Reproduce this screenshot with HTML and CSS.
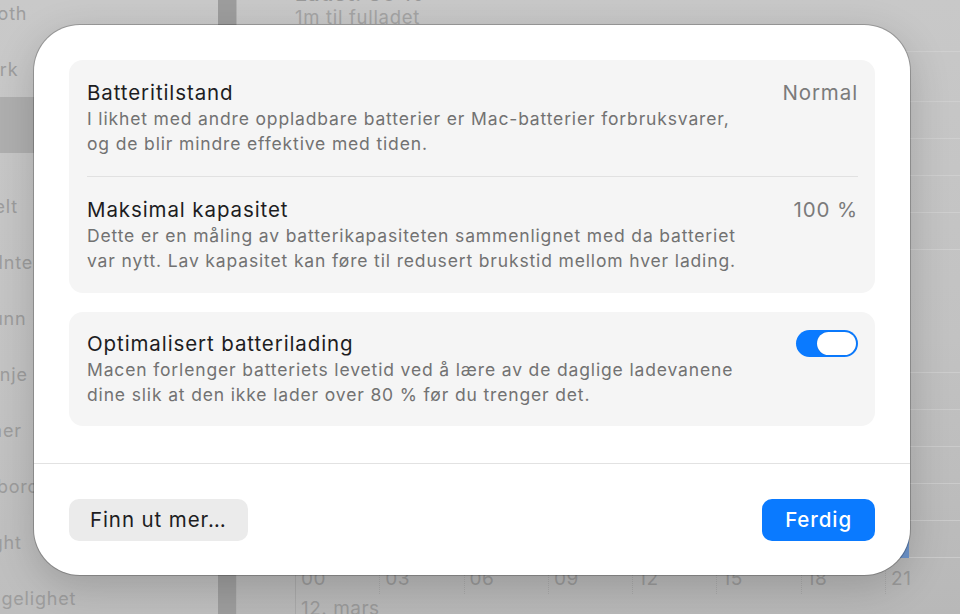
FILE: index.html
```html
<!DOCTYPE html>
<html lang="no">
<head>
<meta charset="utf-8">
<title>Batteritilstand</title>
<link rel="stylesheet" href="styles.css">
</head>
<body>
<div class="window">
  <aside class="sidebar">
    <ul class="nav">
      <li class="nav-item">Bluetooth</li>
      <li class="nav-item">Nettverk</li>
      <li class="nav-item is-active">Batteri</li>
      <li class="nav-item nav-group">Generelt</li>
      <li class="nav-item">Apple Intelligence og Siri</li>
      <li class="nav-item">Bakgrunn</li>
      <li class="nav-item">Menylinje</li>
      <li class="nav-item">Skjermer</li>
      <li class="nav-item">Skrivebord og Dock</li>
      <li class="nav-item">Spotlight</li>
      <li class="nav-item">Tilgjengelighet</li>
    </ul>
  </aside>
  <div class="split"></div>
  <main class="main">
    <header class="status">
      <div class="status-title">Ladet: 80 %</div>
      <div class="status-sub">1m til fulladet</div>
    </header>
    <div class="list">
      <div class="list-row list-row-first"></div>
      <div class="list-row"></div>
      <div class="list-row"></div>
      <div class="list-row"></div>
      <div class="list-row"></div>
    </div>
    <div class="chart">
      <div class="plot">
        <div class="plot-row"></div>
        <div class="plot-row"></div>
        <div class="plot-row"></div>
        <div class="plot-row"></div>
        <div class="plot-row"></div>
        <div class="bar"></div>
      </div>
      <div class="axis">
        <span class="tick tick-first">00</span>
        <span class="tick">03</span>
        <span class="tick">06</span>
        <span class="tick">09</span>
        <span class="tick">12</span>
        <span class="tick">15</span>
        <span class="tick">18</span>
        <span class="tick">21</span>
      </div>
      <div class="date">12. mars</div>
    </div>
  </main>
</div>

<section class="sheet">
  <div class="sheet-body">
    <div class="card">
      <div class="row">
        <div class="text">
          <div class="title">Batteritilstand</div>
          <div class="desc">I likhet med andre oppladbare batterier er Mac-batterier forbruksvarer,<br>og de blir mindre effektive med tiden.</div>
        </div>
        <div class="value">Normal</div>
      </div>
      <div class="row">
        <div class="text">
          <div class="title">Maksimal kapasitet</div>
          <div class="desc">Dette er en måling av batterikapasiteten sammenlignet med da batteriet<br>var nytt. Lav kapasitet kan føre til redusert brukstid mellom hver lading.</div>
        </div>
        <div class="value">100 %</div>
      </div>
    </div>
    <div class="card card-toggle">
      <div class="row">
        <div class="text">
          <div class="title">Optimalisert batterilading</div>
          <div class="desc">Macen forlenger batteriets levetid ved å lære av de daglige ladevanene<br>dine slik at den ikke lader over 80 % før du trenger det.</div>
        </div>
        <div class="toggle" role="switch" aria-checked="true"><span class="knob"></span></div>
      </div>
    </div>
  </div>
  <footer class="sheet-footer">
    <button class="btn btn-secondary">Finn ut mer…</button>
    <button class="btn btn-primary">Ferdig</button>
  </footer>
</section>
</body>
</html>
```

FILE: styles.css
```css
* { box-sizing: border-box; }

html, body {
  margin: 0;
  padding: 0;
  width: 960px;
  height: 614px;
  overflow: hidden;
  font-family: "Inter", "Noto Sans", "Liberation Sans", sans-serif;
}

body {
  position: relative;
  background: #c4c4c4;
}

/* ---------- dimmed window behind the sheet ---------- */
.window {
  display: flex;
  width: 960px;
  height: 614px;
  overflow: hidden;
}

.sidebar {
  width: 218px;
  flex: none;
  background: linear-gradient(180deg, #c9c9c9 0%, #c4c4c4 60%, #bebebe 100%);
  overflow: hidden;
}

.nav {
  list-style: none;
  margin: -15px 0 0 0;
  padding: 0;
}

.nav-item {
  height: 56px;
  display: flex;
  align-items: center;
  text-indent: -61px;
  font-size: 18px;
  letter-spacing: 0.8px;
  color: #9d9d9d;
  white-space: nowrap;
}

.nav-item.is-active {
  background: #afafaf;
  color: #8c8c8c;
}

.nav-group {
  margin-top: 25px;
}

.split {
  width: 19px;
  flex: none;
  background: #9d9d9d;
  border-right: 1px solid #b3b3b3;
}

.main {
  flex: 1;
  display: flex;
  flex-direction: column;
  background: linear-gradient(180deg, #c8c8c8 0%, #c2c2c2 55%, #b8b8b8 100%);
  padding-left: 58px;
  overflow: hidden;
}

.main > * {
  flex: none;
}

.status {
  margin-top: -17px;
  height: 69px;
  border-bottom: 1px solid #d0d0d0;
}

.status-title {
  font-size: 21px;
  font-weight: 600;
  line-height: 22px;
  letter-spacing: 0.6px;
  color: #999999;
}

.status-sub {
  font-size: 18.5px;
  line-height: 24px;
  letter-spacing: 0.7px;
  color: #a4a4a4;
}

.list-row {
  height: 37px;
  border-bottom: 1px solid #cfcfcf;
}

.list-row-first {
  height: 50px;
}

.chart {
  margin-top: 122px;
  display: flex;
  flex-direction: column;
}

.plot {
  position: relative;
  border-top: 1px solid #cdcdcd;
}

.plot-row {
  height: 37px;
  border-bottom: 1px solid #cbcbcb;
}

.bar {
  position: absolute;
  left: 600px;
  bottom: 0;
  width: 14px;
  height: 60px;
  background: #6f97cf;
  border-radius: 2px 2px 0 0;
}

.axis {
  display: flex;
  height: 36px;
}

.tick {
  width: 84.3px;
  flex: none;
  padding: 10px 0 0 5px;
  font-size: 19px;
  line-height: 22px;
  letter-spacing: 0.5px;
  color: #9a9a9a;
  border-left: 1px dotted #a9a9a9;
}

.tick-first {
  border-left: 1px solid #a9a9a9;
}

.date {
  padding: 4px 0 0 5px;
  font-size: 19px;
  line-height: 22px;
  letter-spacing: 0.5px;
  color: #9a9a9a;
  border-left: 1px solid #a9a9a9;
}

/* ---------- sheet ---------- */
.sheet {
  position: absolute;
  left: 34px;
  top: 25px;
  width: 876px;
  height: 550px;
  background: #ffffff;
  border-radius: 46px;
  box-shadow: 0 0 0 1px rgba(0, 0, 0, 0.22), 0 12px 40px rgba(0, 0, 0, 0.18);
  display: flex;
  flex-direction: column;
  overflow: hidden;
}

.sheet-body {
  padding: 35px 35px 37px;
  display: flex;
  flex-direction: column;
  gap: 19px;
}

.card {
  background: #f5f5f5;
  border-radius: 14px;
  padding: 0 17px 0 18px;
}

.row {
  display: flex;
  justify-content: space-between;
  align-items: flex-start;
  gap: 20px;
  padding: 20px 0;
}

.row + .row {
  border-top: 1px solid #e1e1e1;
}

.card-toggle .row {
  padding: 19px 0;
}

.title {
  font-size: 20.5px;
  line-height: 26px;
  letter-spacing: 0.9px;
  color: #1d1d1f;
}

.desc {
  font-size: 17.5px;
  line-height: 25px;
  letter-spacing: 0.85px;
  color: #727272;
}

.value {
  font-size: 20.5px;
  line-height: 26px;
  letter-spacing: 0.9px;
  color: #7b7b7b;
  white-space: nowrap;
}

.toggle {
  flex: none;
  width: 62px;
  height: 27px;
  margin-top: -1px;
  border-radius: 14px;
  background: #0a7aff;
  display: flex;
  justify-content: flex-end;
  align-items: center;
  padding: 2px;
}

.knob {
  width: 39px;
  height: 23px;
  border-radius: 12px;
  background: #ffffff;
  box-shadow: 0 0 1px rgba(0, 0, 0, 0.25);
}

.sheet-footer {
  border-top: 1px solid #e2e2e2;
  padding: 35px;
  display: flex;
  justify-content: space-between;
  align-items: center;
}

.btn {
  height: 42px;
  border: none;
  border-radius: 10px;
  font-family: inherit;
  font-size: 20.5px;
  letter-spacing: 0.9px;
  line-height: 42px;
  padding: 0 21px;
}

.btn-secondary {
  background: #ebebeb;
  color: #1d1d1f;
}

.btn-primary {
  background: #0a7aff;
  color: #ffffff;
  font-weight: 500;
  padding: 0 23px;
}
```
